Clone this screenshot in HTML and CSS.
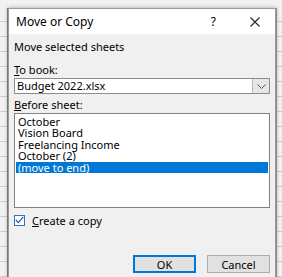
FILE: index.html
```html
<!DOCTYPE html>
<html>
<head>
<meta charset="utf-8">
<link rel="stylesheet" href="styles.css">
<title>Move or Copy</title>
</head>
<body>
 <!-- dialog window over the sheet -->
 <div class="dialog">
  <div class="titlebar">
   <span class="title">Move or Copy</span>
   <span class="help">?</span>
   <svg class="close" width="10" height="10" viewBox="0 0 10 10"><path d="M0.5 0.5L9.5 9.5M9.5 0.5L0.5 9.5" stroke="#222" stroke-width="1.1"/></svg>
  </div>

  <div class="content">
   <p class="lead">Move selected sheets</p>

   <p class="label"><u>T</u>o book:</p>
   <div class="combo">
    <span class="combo-text">Budget 2022.xlsx</span>
    <span class="combo-btn"><svg width="9" height="5" viewBox="0 0 9 5"><path d="M0.5 0.5L4.5 4.5L8.5 0.5" fill="none" stroke="#555" stroke-width="1"/></svg></span>
   </div>

   <p class="label label-sheet"><u>B</u>efore sheet:</p>
   <div class="listbox">
    <div class="item">October</div>
    <div class="item">Vision Board</div>
    <div class="item">Freelancing Income</div>
    <div class="item">October (2)</div>
    <div class="item selected">(move to end)</div>
   </div>

   <div class="check-row">
    <span class="checkbox"><svg width="9" height="8" viewBox="0 0 9 8"><path d="M0.8 4L3.3 6.6L8.3 0.8" fill="none" stroke="#1a5fb4" stroke-width="1.2"/></svg></span>
    <span class="check-label"><u>C</u>reate a copy</span>
   </div>

   <div class="buttons">
    <button class="btn btn-default">OK</button>
    <button class="btn">Cancel</button>
   </div>
  </div>
 </div>
</body>
</html>
```

FILE: styles.css
```css
* {
  box-sizing: border-box;
}

body {
  margin: 0;
  height: 277px;
  overflow: hidden;
  font-family: "Noto Sans", "Open Sans", sans-serif;
  font-size: 11px;
  color: #000;
  background-color: #f2f2f2;
  background-image: repeating-linear-gradient(to bottom, #f2f2f2 0, #f2f2f2 14px, #cfcfcf 14px, #cfcfcf 15px);
  background-position: 0 7px;
  padding: 8px 6px 0 8px;
}

.dialog {
  width: 268px;
  height: 269px;
  overflow: hidden;
  background-color: #f0f0f0;
  border: 1px solid #9a9a9a;
  border-bottom: none;
  box-shadow: -1px 0 0 #777, 1px 0 0 #888, 0 0 4px rgba(0, 0, 0, 0.35);
}

.titlebar {
  height: 25px;
  background-color: #ffffff;
  display: flex;
  align-items: center;
  padding: 0 0 0 7px;
}

.title {
  font-size: 12px;
  flex: 1;
}

.help {
  font-size: 12px;
  margin-right: 34px;
}

.close {
  margin-right: 15px;
}

.content {
  padding: 6px 5px 0 5px;
}

p {
  margin: 0;
  line-height: 14px;
}

.lead {
  margin-bottom: 9px;
}

.label {
  margin-bottom: 1px;
}

.label-sheet {
  margin-top: 4px;
}

.combo {
  height: 16px;
  display: flex;
  background-color: #ffffff;
  border: 1px solid #8c8c8c;
}

.combo-text {
  flex: 1;
  padding-left: 2px;
  line-height: 14px;
}

.combo-btn {
  width: 17px;
  background-color: #e6e6e6;
  border-left: 1px solid #b9b9b9;
  display: flex;
  align-items: center;
  justify-content: center;
}

.listbox {
  height: 95px;
  background-color: #ffffff;
  border: 1px solid #828282;
  padding: 2px 1px;
}

.item {
  height: 11.4px;
  line-height: 11.4px;
  padding-left: 2px;
}

.item.selected {
  background-color: #0078d7;
  color: #ffffff;
}

.check-row {
  display: flex;
  align-items: center;
  margin-top: 6px;
  height: 12px;
}

.checkbox {
  width: 11px;
  height: 11px;
  border: 1px solid #2f72c4;
  background-color: #ffffff;
  display: flex;
  align-items: center;
  justify-content: center;
  margin-right: 7px;
}

.buttons {
  display: flex;
  justify-content: flex-end;
  gap: 11px;
  margin-top: 29px;
}

.btn {
  width: 63px;
  height: 18px;
  padding: 0;
  font-family: "Noto Sans", "Open Sans", sans-serif;
  font-size: 11px;
  color: #000;
  background-color: #e1e1e1;
  border: 1px solid #adadad;
}

.btn-default {
  border: 2px solid #0078d7;
}
```
